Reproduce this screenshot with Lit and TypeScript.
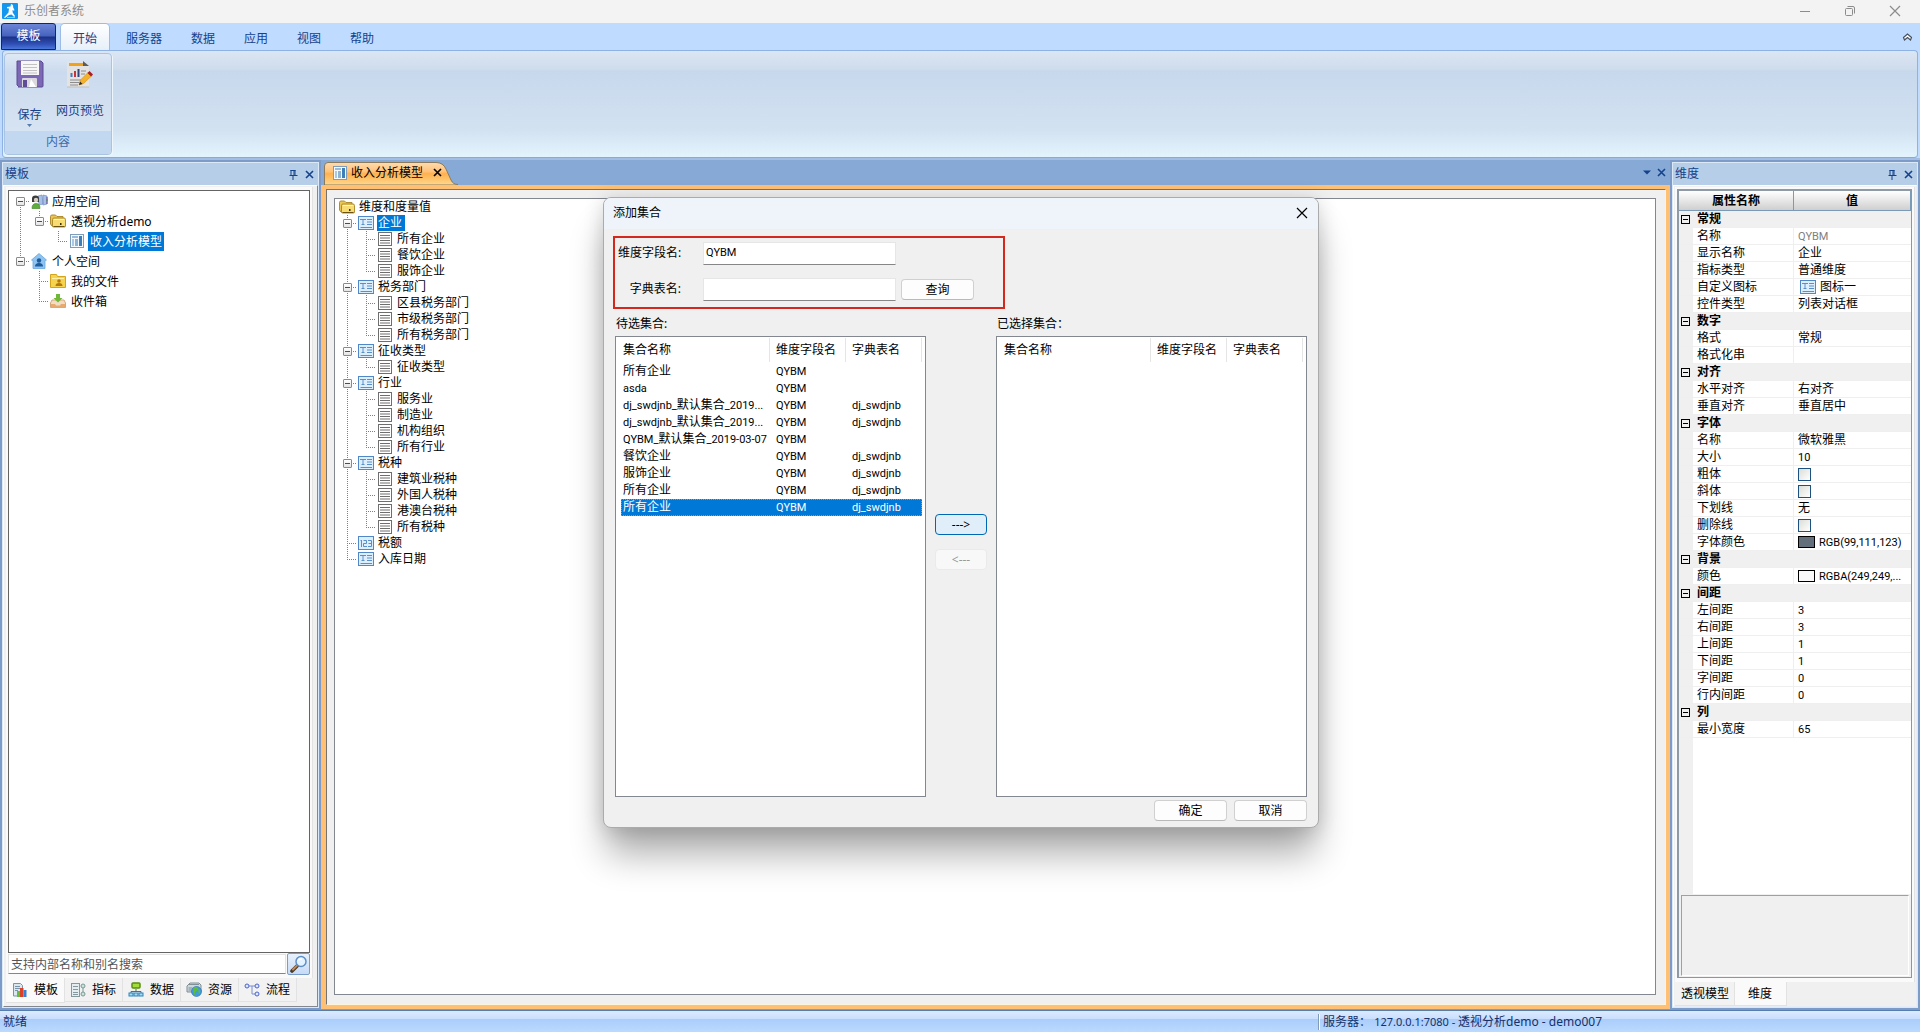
import { LitElement, html, svg, css, nothing } from "lit";
import { customElement, property, state } from "lit/decorators.js";
import { classMap } from "lit/directives/class-map.js";

/* ---------- icons ---------- */

const draw = (w: number, h: number, body: unknown, box = `0 0 ${w} ${h}`) =>
  html`<svg width=${w} height=${h} viewBox=${box} aria-hidden="true">${body}</svg>`;

const icons: Record<string, () => unknown> = {
  logo: () => draw(16, 16, svg`
    <rect width="16" height="16" rx="1" fill="#1296ee"/>
    <path d="M9 1l2 1 .2 2.500 1.300 2.500-.5.800-1.500-.8.200 2.500 2.300 3.500-.8 1-2.700-2.500-2.500.500L3 15l-1-.5 4.500-5L7 5.500 5 5.200V4l3.500-.5z" fill="#fff"/>
    <path d="M5 14.500h8" stroke="#bfe3ff" stroke-width=".7"/>`),
  save: () => draw(28, 28, svg`
    <path d="M1 1h24l2 2v23q0 1-1 1H3l-2-2z" fill="#7c68b4" stroke="#5d4a94"/>
    <rect x="5" y="1" width="18" height="14" fill="#f7f7f7"/>
    <path d="M7 4.500h14M7 7.500h14M7 10.500h14M7 13h14" stroke="#c2c2c2"/>
    <path d="M6 27v-8q0-1 1-1h13q1 0 1 1v8z" fill="#d9d9de"/>
    <path d="M7 27v-7h4v7z" fill="#5f4c96"/><path d="M15 19l5 8h-7z" fill="#fff"/>
    <path d="M2 27.500h24" stroke="#9a92b4"/>`),
  preview: () => draw(28, 28, svg`
    <path d="M1 1h17l5 5v21H1z" fill="#e3e3e3"/>
    <path d="M1 27h22" stroke="#bfbfbf"/>
    <path d="M3 3h14l3 3H3z" fill="#f0a21c"/><path d="M17 1l6 5h-6z" fill="#5c5c5c"/>
    <path d="M5.500 17v-4" stroke="#3f7fc0" stroke-width="2"/><path d="M9 17v-6" stroke="#c8323a" stroke-width="2"/>
    <path d="M12.500 17V9" stroke="#33447c" stroke-width="2"/>
    <path d="M15 11h5M15 14h4M4 20h11M4 22.500h9M4 25h8" stroke="#8c8c8c"/>
    <path d="M13 25l1.500-5 8-8 3.500 3.500-8.500 8z" fill="#f3b229" stroke="#d98d12" stroke-width=".6"/>
    <path d="M13 25l1-3.500 2.500 2.500z" fill="#2b2b2b"/>
    <path d="M21.500 13l2-2 3.500 3.500-2 2z" fill="#a81f2c"/>`),
  pin: () => draw(9, 11, svg`<path d="M2.500 1v5M6.500 1v5M2 1.500h5M1 6.500h8M4.500 7v4M5.500 1v5" transform="translate(-.5)" stroke="#15428b" fill="none"/>`),
  close: () => draw(9, 9, svg`<path d="M1 1l7 7M8 1l-7 7" stroke="currentColor" stroke-width="1.600"/>`),
  xthin: () => draw(12, 12, svg`<path d="M1 1l10 10M11 1L1 11" stroke="currentColor" stroke-width="1.200"/>`),
  min: () => draw(12, 12, svg`<path d="M1 6.500h10" stroke="currentColor"/>`),
  restore: () => draw(12, 12, svg`<path d="M3.500 1.500H9q1.500 0 1.500 1.500v5.500" stroke="currentColor" fill="none"/><rect x="1.500" y="3.500" width="7" height="7" rx="1" stroke="currentColor" fill="none"/>`),
  collapse: () => draw(11, 8, svg`<path d="M1.500 4.500l4-3.500 4 3.500-1 2.500-3-2.500L2.500 7z" fill="#fff" stroke="#44505f" stroke-width="1.200"/>`),
  down: () => draw(8, 5, svg`<path d="M0 .5h8l-4 4z" fill="currentColor"/>`),
  more: () => draw(5, 3, svg`<path d="M0 0h5L2.500 3z" fill="currentColor"/>`),
  folder: () => draw(16, 14, svg`
    <path d="M.5 2.500q0-1.500 1.500-1.500h3.500l1.500 1.500H13v9.500H2L.5 10z" fill="#e9c655" stroke="#a88524" stroke-width=".9"/>
    <path d="M2.500 5.500q0-1.500 1.500-1.500h10q1.500 0 1.500 1.500V12q0 1-1 1H3.500q-1 0-1-1z" fill="#f7dc74" stroke="#a88524" stroke-width=".9"/>
    <path d="M4 5.500h10" stroke="#fff6c2"/><path d="M3.500 12.500h11" stroke="#6b5210"/><rect x="10" y="9" width="1.500" height="2" fill="#3a2c08"/>`),
  users: () => draw(17, 15, svg`
    <path d="M7 2l4-1 1 9-4 1zM12 1l4 1v8l-4 1z" fill="#a9c0e6" stroke="#6f8fc4" stroke-width=".7"/>
    <path d="M16 3v7" stroke="#7a3fa0"/><path d="M16 5v2" stroke="#3f9c3a"/>
    <path d="M1 8V4.500Q1 1.500 4.500 1.500T8 4.500V8z" fill="#3b3b3b"/><circle cx="5" cy="6" r="2.200" fill="#d9d0c4"/>
    <path d="M1 14.500q0-5 4-5t4 5z" fill="#5fae3c" stroke="#3c7d22" stroke-width=".6"/>`),
  report: () => draw(14, 14, svg`
    <rect x=".5" y=".5" width="13" height="13" fill="#f4f9fd" stroke="#7f9dbb"/>
    <rect x="2" y="2" width="6" height="2" fill="#9bbbd8"/><rect x="2" y="5" width="2" height="7" fill="#a9c8e2"/>
    <rect x="5" y="5" width="3" height="7" fill="#8fb3d2"/><rect x="9" y="2" width="3" height="10" fill="#3f7fb8"/>`),
  home: () => draw(16, 16, svg`
    <path d="M8 .500l7.500 6.500-1.500.500V15.500H2V7.500L.5 7z" fill="#8fc3f2" stroke="#6aa6dd" stroke-width=".8"/>
    <circle cx="8" cy="7.500" r="2.200" fill="#1f5c9c"/><path d="M4 13.500q0-3.500 4-3.500t4 3.500z" fill="#1f5c9c"/>`),
  myfile: () => draw(16, 14, svg`
    <path d="M.5.500h6l1 2h8v11H.5z" fill="#f6d34e" stroke="#d3a51f"/><path d="M2 4.500h12" stroke="#fff0a8"/>
    <circle cx="9" cy="7" r="1.800" fill="#b3780b"/><path d="M5.500 12q0-3 3.500-3t3.500 3z" fill="#b3780b"/>`),
  inbox: () => draw(16, 14, svg`
    <path d="M2 6h12l1.500 3v4.500H.5V9z" fill="#f2dcc4" stroke="#d5a67a"/><path d="M1 10h4l1 1.500h4L11 10h4v3.500H1z" fill="#e8a96c"/>
    <path d="M6 0h4v4h2.500L8 8.500 3.500 4H6z" fill="#6fb83a"/>`),
  dim: () => draw(16, 14, svg`
    <rect x=".5" y=".5" width="15" height="13" fill="#ddeffc" stroke="#4f87c7"/>
    <path d="M2 3.500h6M5 3.500v5M3.500 8.500h3M9 3.500h5M9 6h5M9 8.500h5M2.500 11.500h11.500" stroke="#5a8fcb" fill="none"/>`),
  num: () => draw(16, 14, svg`
    <rect x=".5" y=".5" width="15" height="13" fill="#ddeffc" stroke="#4f87c7"/>
    <path d="M3.500 4v7M2.500 4.500h1M5.500 4.500h3v3h-3v3h3.500M10 4.500h3.500v6H10M10.500 7.500h3" stroke="#5a8fcb" fill="none"/>`),
  member: () => draw(14, 14, svg`
    <rect x=".5" y=".5" width="13" height="13" fill="#fff" stroke="#6e6e6e"/>
    <path d="M2 3.500h10M2 6h10M2 8.500h10M2 11h10" stroke="#6e6e6e"/>`),
  search: () => draw(18, 18, svg`
    <path d="M7.500 10.500L2 16" stroke="#4a3a2c" stroke-width="3.600" stroke-linecap="round"/>
    <path d="M7.500 10L3 14.500" stroke="#c08a55" stroke-width="2" stroke-linecap="round"/>
    <circle cx="11" cy="6.500" r="5" fill="#e3f3ff" stroke="#5d8fc7" stroke-width="1.500"/>
    <path d="M8.500 5.500q1-2 3.500-1.500" stroke="#fff" stroke-width="1.500" fill="none"/>`),
  tabTemplate: () => draw(16, 16, svg`
    <path d="M1.500 1.500h7l2 2V14h-9z" fill="#dbe7ef" stroke="#7894a8"/><path d="M3 4.500h5M3 6.500h5M3 8.500h3" stroke="#7894a8"/>
    <rect x="5" y="9" width="3" height="6" fill="#5fbf3f"/><rect x="8" y="6" width="3.500" height="9" fill="#d9412b"/><rect x="11.500" y="8" width="3" height="7" fill="#3b7fd0"/>`),
  tabIndex: () => draw(16, 16, svg`
    <rect x="1.500" y="1.500" width="8" height="13" fill="#e4eef0" stroke="#84989e"/><path d="M3 4.500h5M3 7.500h5M3 10.500h5M3 12.500h5" stroke="#84989e"/>
    <circle cx="13" cy="4" r="2" fill="#c9e2dc" stroke="#7b9a94"/><circle cx="13" cy="12" r="2" fill="#c9e2dc" stroke="#7b9a94"/><path d="M13 6v4" stroke="#7b9a94"/>`),
  tabData: () => draw(16, 16, svg`
    <rect x="4" y="1" width="8" height="5" rx="1" fill="#a6dc3a" stroke="#5a8f12" stroke-width="1.500"/><path d="M8 7v3M3 11V9.500h10V11" stroke="#5a6a7a" fill="none"/>
    <rect x="1" y="11" width="4" height="3" fill="#9fdcf5" stroke="#2c84ba"/><rect x="6" y="11" width="4" height="3" fill="#9fdcf5" stroke="#2c84ba"/><rect x="11" y="11" width="4" height="3" fill="#9fdcf5" stroke="#2c84ba"/>`),
  tabRes: () => draw(16, 16, svg`
    <path d="M1 4l3-3h9l2 2v7H1z" fill="#cdd8dc" stroke="#7e8f96"/><path d="M3 2.500h10M2.500 6h4M2.500 8h3" stroke="#7e8f96"/>
    <circle cx="10.500" cy="9.500" r="5" fill="#3f9be0" stroke="#2668a8" stroke-width=".6"/><path d="M7.500 6q2-2 4-.5t-1 3.500 0 5q-3.500-1-3-8zM13 7q2 2 1 5l-2-2z" fill="#5bbd3a"/>`),
  tabFlow: () => draw(16, 16, svg`
    <path d="M5 4h6M8 4v8h3" stroke="#7a8fd0" fill="none"/><circle cx="3" cy="4" r="2" fill="#dfe6ff" stroke="#4b63c8"/>
    <circle cx="13" cy="4" r="2" fill="#dfe6ff" stroke="#4b63c8"/><circle cx="13" cy="12" r="2" fill="#dfe6ff" stroke="#4b63c8"/>`),
};

/* Latin runs are set one pixel smaller than the Chinese text beside them. */
const mixed = (text: string) =>
  text.split(/([\x20-\x7e]+)/).filter(Boolean).map((part) =>
    /^[\x20-\x7e]+$/.test(part) ? html`<span class="latin">${part}</span>` : part);

const base = css`
  *, *::before, *::after { box-sizing: border-box; }
  svg { display: block; flex: none; }
  button, input { font: inherit; color: inherit; margin: 0; }
  button { padding: 0; border: 0; background: none; }
  button, a { cursor: default; }
  .latin { font-family: Roboto, "Noto Sans", sans-serif; font-size: 11px; line-height: 1; }
`;

/* ---------- tree ---------- */

interface Node { label: string; icon: string; selected?: boolean; children?: Node[] }

@customElement("tree-view")
class TreeView extends LitElement {
  @property({ attribute: false }) nodes: Node[] = [];
  @property({ type: Number }) row = 16;
  @property({ type: Boolean }) rooted = false;
  @state() private closed = new Set<Node>();

  static styles = [base, css`
    :host { display: block; color: #000; }
    .row { display: flex; align-items: center; white-space: nowrap; }
    .row.h20 { height: 20px; }
    .row.h16 { height: 16px; }
    .guide { display: grid; width: 19px; place-items: center; flex: none; }
    .guide > * { grid-area: 1 / 1; }
    .box { width: 9px; height: 9px; border: 1px solid #8a8a8a; border-radius: 1px; background: linear-gradient(#fff, #e4e4e4); display: grid; place-items: center; }
    .bar { width: 5px; height: 1px; background: #35507c; }
    .pic { width: 18px; display: grid; place-items: center; flex: none; }
    .label { margin-left: 2px; padding: 0 2px; }
    .h16 .label { padding: 0 3px 0 1px; line-height: 16px; }
    .h20 .label { line-height: 19px; }
    .label.selected { background: #0078d7; color: #fff; }
  `];

  private toggle(n: Node) {
    const next = new Set(this.closed);
    next.has(n) ? next.delete(n) : next.add(n);
    this.closed = next;
  }

  private line(up: boolean, down: boolean, across: boolean) {
    const h = this.row, mid = h / 2;
    return html`<svg width="19" height=${h} shape-rendering="crispEdges" aria-hidden="true">${svg`
      <g stroke="#808080" stroke-dasharray="1 1">
        ${up ? svg`<path d="M9.500 0V${mid}"/>` : nothing}
        ${down ? svg`<path d="M9.500 ${mid}V${h}"/>` : nothing}
        ${across ? svg`<path d="M9 ${mid + 0.5}H19"/>` : nothing}
      </g>`}</svg>`;
  }

  private branch(nodes: Node[], trail: boolean[], level: number): unknown {
    return nodes.map((n, i) => {
      const last = i === nodes.length - 1;
      const bare = this.rooted && level === 0;
      return html`
        <div class="row h${this.row}" role="treeitem" aria-selected=${n.selected ? "true" : "false"}>
          ${trail.map((on) => html`<span class="guide">${this.line(on, on, false)}</span>`)}
          ${bare ? nothing : html`<span class="guide">
            ${this.line(level > 0 || i > 0, !last, true)}
            ${n.children ? html`<button class="box" aria-label=${n.label} @click=${() => this.toggle(n)}><span class="bar"></span></button>` : nothing}
          </span>`}
          <span class="pic">${icons[n.icon]()}</span>
          <span class=${classMap({ label: true, selected: !!n.selected })}>${n.label}</span>
        </div>
        ${n.children && !this.closed.has(n) ? this.branch(n.children, bare ? [] : [...trail, !last], level + 1) : nothing}`;
    });
  }

  render() {
    return html`<div role="tree">${this.branch(this.nodes, [], 0)}</div>`;
  }
}

/* ---------- dialog ---------- */

const sets: string[][] = [
  ["所有企业", "QYBM", ""],
  ["asda", "QYBM", ""],
  ["dj_swdjnb_默认集合_2019...", "QYBM", "dj_swdjnb"],
  ["dj_swdjnb_默认集合_2019...", "QYBM", "dj_swdjnb"],
  ["QYBM_默认集合_2019-03-07", "QYBM", ""],
  ["餐饮企业", "QYBM", "dj_swdjnb"],
  ["服饰企业", "QYBM", "dj_swdjnb"],
  ["所有企业", "QYBM", "dj_swdjnb"],
  ["所有企业", "QYBM", "dj_swdjnb"],
];

@customElement("set-dialog")
class SetDialog extends LitElement {
  @state() private picked = 8;

  static styles = [base, css`
    :host { position: absolute; inset: 0; display: grid; place-items: center; padding: 0 0 8px 2px; color: #000; }
    dialog { position: static; margin: 0; padding: 0; border: 1px solid #a9abad; border-radius: 8px; background: #f0f0f0; color: inherit;
      width: 716px; overflow: hidden; box-shadow: 0 30px 36px -4px rgba(0,0,0,.32), 0 2px 20px rgba(0,0,0,.16); }
    header { display: flex; justify-content: space-between; align-items: center; height: 31px; padding: 0 10px 0 9px; background: #eef4f9; }
    h2 { margin: 0; font-size: 12px; font-weight: 400; }
    .body { padding: 7px 11px 6px; }
    form { width: 392px; margin-left: -2px; border: 2px solid #d4281e; padding: 4px 3px 6px; display: grid; grid-template-columns: 80px 193px 73px; grid-auto-rows: 23px; gap: 13px 5px; align-items: center; }
    label { padding-right: 17px; text-align: right; white-space: nowrap; line-height: 20px; }
    .text { width: 100%; height: 23px; border: 1px solid #e6e6e6; border-bottom-color: #868686; border-radius: 0; background: #fff; padding: 0 2px 2px; outline: none; font-family: Roboto, "Noto Sans CJK SC", sans-serif; font-size: 11px; }
    .btn { height: 21px; width: 73px; border: 1px solid #d0d0d0; border-bottom-color: #b9b9b9; border-radius: 4px; background: #fdfdfd; line-height: 19px; }
    .btn.move { width: 52px; }
    .btn.hot { background: #e0eef9; border-color: #0067b5; }
    .btn:disabled { background: #f8f8f8; border-color: #eaeaea; color: #9a9a9a; }
    .lists { display: grid; grid-template-columns: 1fr 70px 1fr; }
    .caption { margin: 4px 0 0; height: 23px; line-height: 22px; padding-left: 1px; }
    .moves { display: flex; flex-direction: column; align-items: center; gap: 14px; padding-top: 205px; }
    .list { height: 461px; border: 1px solid #828790; background: #fff; padding: 0 0 0 5px; }
    table { border-collapse: collapse; table-layout: fixed; width: 301px; }
    .c1 { width: 149px; }
    th, td { text-align: left; font-weight: 400; padding: 0 0 0 6px; white-space: nowrap; overflow: hidden; }
    th:first-child, td:first-child { padding-left: 2px; }
    th { height: 26px; padding-bottom: 0; background: linear-gradient(#e5e5e5, #e5e5e5) right 1px / 1px 24px no-repeat; }
    td { height: 17px; line-height: 16px; }
    .on td { background: #0078d7; color: #fff; }
    .on { outline: 1px dotted #d8863a; outline-offset: -1px; }
    footer { display: flex; justify-content: flex-end; gap: 7px; padding-top: 3px; }
  `];

  private list(rows: string[][]) {
    return html`<div class="list"><table>
      <colgroup><col class="c1" /><col /><col /></colgroup>
      <thead><tr><th>集合名称</th><th>维度字段名</th><th>字典表名</th></tr></thead>
      <tbody>${rows.map((r, i) => html`<tr class=${classMap({ on: i === this.picked })} @click=${() => (this.picked = i)}>
        ${r.map((c) => html`<td>${mixed(c)}</td>`)}</tr>`)}</tbody>
    </table></div>`;
  }

  render() {
    return html`<dialog open aria-labelledby="title">
      <header><h2 id="title">添加集合</h2><button aria-label="关闭">${icons.xthin()}</button></header>
      <div class="body">
        <form @submit=${(e: Event) => e.preventDefault()}>
          <label for="field">维度字段名:</label><input id="field" class="text" .value=${"QYBM"} /><span></span>
          <label for="dict">字典表名:</label><input id="dict" class="text" /><button class="btn">查询</button>
        </form>
        <div class="lists">
          <div><p class="caption">待选集合:</p>${this.list(sets)}</div>
          <div class="moves"><button class="btn move hot">---&gt;</button><button class="btn move" disabled>&lt;---</button></div>
          <div><p class="caption">已选择集合：</p>${this.list([])}</div>
        </div>
        <footer><button class="btn">确定</button><button class="btn">取消</button></footer>
      </div>
    </dialog>`;
  }
}

/* ---------- property grid ---------- */

interface Prop { name: string; value?: string; muted?: boolean; icon?: string; check?: boolean; swatch?: string }

const groups: { title: string; items: Prop[] }[] = [
  { title: "常规", items: [{ name: "名称", value: "QYBM", muted: true }, { name: "显示名称", value: "企业" }, { name: "指标类型", value: "普通维度" }, { name: "自定义图标", value: "图标一", icon: "dim" }, { name: "控件类型", value: "列表对话框" }] },
  { title: "数字", items: [{ name: "格式", value: "常规" }, { name: "格式化串" }] },
  { title: "对齐", items: [{ name: "水平对齐", value: "右对齐" }, { name: "垂直对齐", value: "垂直居中" }] },
  { title: "字体", items: [{ name: "名称", value: "微软雅黑" }, { name: "大小", value: "10" }, { name: "粗体", check: true }, { name: "斜体", check: true }, { name: "下划线", value: "无" }, { name: "删除线", check: true }, { name: "字体颜色", value: "RGB(99,111,123)", swatch: "rgb(99,111,123)" }] },
  { title: "背景", items: [{ name: "颜色", value: "RGBA(249,249,...", swatch: "rgb(249,249,249)" }] },
  { title: "间距", items: [{ name: "左间距", value: "3" }, { name: "右间距", value: "3" }, { name: "上间距", value: "1" }, { name: "下间距", value: "1" }, { name: "字间距", value: "0" }, { name: "行内间距", value: "0" }] },
  { title: "列", items: [{ name: "最小宽度", value: "65" }] },
];

@customElement("property-grid")
class PropertyGrid extends LitElement {
  static styles = [base, css`
    :host { display: flex; flex-direction: column; border: 2px solid #8f9aa8; border-right: 1px solid #7b99bd; border-bottom: 1px solid #7b99bd; color: #000; background: #f0f0f0; }
    .sheet { flex: 1; background: linear-gradient(90deg, #f0f0f0 14px, #fff 14px); }
    table { border-collapse: separate; border-spacing: 0; table-layout: fixed; width: 100%; }
    .g { width: 14px; } .n { width: 101px; }
    th { height: 20px; padding: 0; font-weight: 700; line-height: 19px; background: linear-gradient(#fff, #cfcfcf); border-right: 1px solid #7b9ab8; border-bottom: 1px solid #7b9ab8; }
    td { height: 17px; padding: 0 0 0 4px; line-height: 16px; border-bottom: 1px solid #efefef; white-space: nowrap; overflow: hidden; }
    td:first-child { padding: 0 0 0 2px; background: #f0f0f0; }
    .item td:nth-child(2) { border-right: 1px solid #efefef; }
    .cat td { background: #f0f0f0; font-weight: 700; }
    .fold { display: grid; place-items: center; width: 9px; height: 9px; border: 1px solid #000; }
    .fold span { width: 5px; height: 1px; background: #000; }
    .val { display: flex; align-items: center; gap: 4px; height: 16px; }
    .val svg { margin-left: 2px; }
    .muted { color: #808080; }
    .swatch { width: 17px; height: 12px; border: 1px solid #000; }
    input { appearance: none; width: 13px; height: 13px; border: 1px solid #1c5180; background: linear-gradient(135deg, #dcdcd7, #fff); }
    .note { height: 81px; margin: 1px 2px 1px; border: 1px solid #a0a0a0; border-right-color: #fff; border-bottom-color: #fff; }
  `];

  render() {
    return html`<div class="sheet"><table>
      <colgroup><col class="g" /><col class="n" /><col /></colgroup>
      <thead><tr><th colspan="2">属性名称</th><th>值</th></tr></thead>
      <tbody>${groups.map((g, gi) => html`
        <tr class="cat"><td><button class="fold" aria-label=${g.title}><span></span></button></td><td colspan="2">${g.title}</td></tr>
        ${g.items.map((p, i) => {
          const id = `p${gi}-${i}`;
          return html`<tr class="item"><td></td>
            <td>${p.check ? html`<label for=${id}>${p.name}</label>` : p.name}</td>
            <td><span class=${classMap({ val: true, muted: !!p.muted })}>
              ${p.icon ? icons[p.icon]() : nothing}
              ${p.swatch ? html`<span class="swatch" style="background:${p.swatch}"></span>` : nothing}
              ${p.check ? html`<input id=${id} type="checkbox" />` : html`<span>${mixed(p.value ?? "")}</span>`}
            </span></td></tr>`;
        })}`)}
      </tbody></table></div><div class="note"></div>`;
  }
}

/* ---------- page ---------- */

const spaces: Node[] = [
  { label: "应用空间", icon: "users", children: [
    { label: "透视分析demo", icon: "folder", children: [{ label: "收入分析模型", icon: "report", selected: true }] }] },
  { label: "个人空间", icon: "home", children: [{ label: "我的文件", icon: "myfile" }, { label: "收件箱", icon: "inbox" }] },
];

const dim = (label: string, members: string[], selected = false): Node =>
  ({ label, icon: "dim", selected, children: members.map((m) => ({ label: m, icon: "member" })) });

const model: Node[] = [{ label: "维度和度量值", icon: "folder", children: [
  dim("企业", ["所有企业", "餐饮企业", "服饰企业"], true),
  dim("税务部门", ["区县税务部门", "市级税务部门", "所有税务部门"]),
  dim("征收类型", ["征收类型"]),
  dim("行业", ["服务业", "制造业", "机构组织", "所有行业"]),
  dim("税种", ["建筑业税种", "外国人税种", "港澳台税种", "所有税种"]),
  { label: "税额", icon: "num" },
  { label: "入库日期", icon: "dim" },
] }];

const sideTabs = [["模板", "tabTemplate"], ["指标", "tabIndex"], ["数据", "tabData"], ["资源", "tabRes"], ["流程", "tabFlow"]];

@customElement("app-root")
class AppRoot extends LitElement {
  static styles = [base, css`
    :host { display: flex; flex-direction: column; position: relative; height: 100vh; overflow: hidden; background: #7c9bc9;
      font: 12px/16px "Noto Sans", "Noto Sans CJK SC", sans-serif; color: #15428b; }
    .title { display: flex; align-items: center; height: 23px; padding: 0 19px 2px 2px; background: #f3f3f3; color: #8c8c8c; gap: 6px; }
    .title span { flex: 1; }
    .wins { display: flex; gap: 33px; }
    nav { display: flex; align-items: stretch; height: 27px; background: #bfdbff; padding: 0 7px 0 1px; gap: 5px; }
    nav button { padding: 5px 12px 0; }
    nav .app { width: 55px; padding: 0 0 2px; border: 1px solid #15246b; border-radius: 3px 3px 0 0; color: #fff; background: linear-gradient(#6c86d6, #4562bd 48%, #1c3185 52%, #2f4fb4 80%, #4a76dc); }
    nav .open { margin-top: 1px; border-radius: 4px 4px 0 0; background: linear-gradient(#fff, #e6eff9); box-shadow: 0 0 0 1px #9dbbe4; padding-top: 4px; }
    nav a { display: grid; place-items: center; color: inherit; }
    .fill { flex: 1; }
    .ribbon-wrap { background: #bfdbff; padding: 0 2px; }
    .ribbon { height: 108px; padding: 2px 1px; border: 1px solid #8db2e3; border-bottom-color: #7fb0d4; border-radius: 4px;
      background: linear-gradient(#dbe6f4, #cfdcec 17%, #c7d8ed 19%, #d3e2f1 75%, #e3f4fe); }
    .group { display: flex; flex-direction: column; width: 108px; height: 102px; border: 1px solid #a9c4e2; border-radius: 4px; box-shadow: 1px 1px 0 #eef6fd; overflow: hidden; background: linear-gradient(#dfe9f5, #cbdaee 18%, #dbe7f4); }
    .tools { flex: 1; display: flex; gap: 2px; padding: 6px 0 0 2px; }
    .tool { display: flex; flex-direction: column; align-items: center; width: 45px; line-height: 16px; }
    .tool.wide { width: 52px; white-space: nowrap; }
    .tool .cap { padding-top: 19px; }
    .tool.wide .cap { padding-top: 15px; }
    .tool .arrow { color: #567db1; padding-top: 1px; }
    .group p { margin: 0; height: 23px; line-height: 22px; text-align: center; background: #c1d8f0; color: #3e6aaa; }
    main { flex: 1; min-height: 0; display: flex; gap: 2px; padding: 0 2px; border-top: 2px solid #a3bee2; }
    .side { display: flex; flex-direction: column; margin: 2px 0; border: 1px solid #dbe8f6; background: #f0f0f0; }
    .left { width: 317px; } .right { width: 246px; }
    .head { display: flex; align-items: center; gap: 7px; height: 22px; padding: 0 4px 0 2px; background: #b7cee8; }
    .head h2 { flex: 1; margin: 0; font-size: 12px; font-weight: 400; }
    .pane { flex: 1; min-height: 0; display: flex; flex-direction: column; padding: 1px 4px 3px 2px; border: 1px solid #fcfcfc; border-right: 1px solid #83888f; border-bottom: 1px solid #83888f; }
    .sheet { flex: 1; min-height: 0; display: flex; flex-direction: column; background: #fafafa; padding: 3px 2px 3px; border-right: 1px solid #e2e2e2; }
    .tree { flex: 1; border: 1px solid #646464; background: #fff; padding-left: 2px; }
    .find { display: flex; gap: 1px; }
    .find input { flex: 1; min-width: 0; height: 20px; margin-top: 1px; border: 1px solid #e4e4e4; border-bottom-color: #868686; background: #fff; padding: 0 2px; color: #555; }
    .find input::placeholder { color: #555; opacity: 1; }
    .find button { display: grid; place-items: center; width: 23px; height: 22px; border: 1px solid #7a9cc8; border-radius: 2px; background: linear-gradient(#e8f1fb, #c6dcf5); }
    .tabs { display: flex; align-items: flex-start; height: 25px; }
    .tabs button { display: flex; align-items: center; gap: 6px; height: 24px; padding: 0 6px 0 5px; border: 1px solid #e2e2e2; border-top: 0; border-left: 0; background: #f2f2f2; color: #000; white-space: nowrap; }
    .tabs .open { height: 25px; background: #fafafa; }
    .left .tabs .open { padding-left: 6px; }
    .right .tabs { height: 24px; }
    .right .tabs button { padding: 0 5px 0 6px; }
    .right .tabs .open { height: 24px; padding: 0 14px 0 13px; }
    .right .pane { padding: 1px 1px 0 1px; border-right-color: #e6edf6; border-bottom-color: #e6edf6; }
    .right .sheet { padding: 2px 2px 4px; }
    property-grid { flex: 1; }
    .doc { flex: 1; min-width: 0; display: flex; flex-direction: column; margin-bottom: 1px; }
    .strip { display: flex; align-items: center; height: 25px; padding: 0 4px 0 3px; background: #87a9d6; gap: 6px; }
    .doctab { display: grid; align-self: flex-end; }
    .doctab > * { grid-area: 1 / 1; }
    .doctab .in { display: flex; align-items: center; padding: 0 0 1px 9px; gap: 4px; color: #000; z-index: 1; }
    .doctab button { margin-left: 6px; display: block; }
    .frame { flex: 1; display: flex; border: 4px solid #ffc073; border-left-width: 5px; }
    .work { flex: 1; display: flex; background: #f0f0f0; border: 1px solid #77736c; border-right-color: #fbf3dc; border-bottom-color: #fbf3dc; padding: 8px 9px 9px 7px; }
    .canvas { flex: 1; border: 1px solid #828790; background: #fff; padding: 0 0 0 3px; }
    .status { display: flex; align-items: center; height: 22px; border-top: 1px solid #567db0; color: #15316b; background: linear-gradient(#dcebff, #c9dffd 36%, #aacdfa 40%, #bcdaff); }
    .state { flex: 1; padding-left: 3px; }
    .host { flex: 0 0 602px; border-left: 1px solid #7f9db9; box-shadow: inset 1px 0 0 #fff; padding-left: 4px; }
    .status .latin { font-family: "Noto Sans", sans-serif; }
  `];

  private head(title: string) {
    return html`<div class="head"><h2>${title}</h2><button aria-label="固定">${icons.pin()}</button><button aria-label="关闭">${icons.close()}</button></div>`;
  }

  render() {
    return html`
      <header class="title">${icons.logo()}<span>乐创者系统</span>
        <div class="wins"><button aria-label="最小化">${icons.min()}</button><button aria-label="还原">${icons.restore()}</button><button aria-label="关闭">${icons.xthin()}</button></div>
      </header>
      <nav><button class="app">模板</button><button class="open">开始</button>
        ${["服务器", "数据", "应用", "视图", "帮助"].map((t) => html`<button>${t}</button>`)}
        <span class="fill"></span><a href="#" aria-label="折叠">${icons.collapse()}</a></nav>
      <div class="ribbon-wrap"><div class="ribbon"><div class="group">
        <div class="tools">
          <button class="tool">${icons.save()}<span class="cap">保存</span><span class="arrow">${icons.more()}</span></button>
          <button class="tool wide">${icons.preview()}<span class="cap">网页预览</span></button>
        </div><p>内容</p></div></div></div>
      <main>
        <section class="side left">${this.head("模板")}
          <div class="pane"><div class="sheet">
            <div class="tree"><tree-view .nodes=${spaces} .row=${20}></tree-view></div>
            <div class="find"><input aria-label="搜索" placeholder="支持内部名称和别名搜索" /><button aria-label="搜索">${icons.search()}</button></div>
          </div>
          <div class="tabs">${sideTabs.map(([t, i], n) => html`<button class=${n ? "" : "open"}>${icons[i]()}${t}</button>`)}</div></div>
        </section>
        <section class="doc">
          <div class="strip">
            <div class="doctab">
              <svg width="134" height="24" viewBox="0 0 134 24"><defs><linearGradient id="o" x2="0" y2="1"><stop offset="0" stop-color="#ffdcae"/><stop offset=".4" stop-color="#ffc27a"/><stop offset=".5" stop-color="#ffb04d"/><stop offset="1" stop-color="#ffd98e"/></linearGradient></defs>
                <path d="M.5 24V5Q.5 1.500 4 1.500H112Q119 1.500 122 8L127 19Q129 23.500 134 23.500V24Z" fill="url(#o)" stroke="#8b7a5c"/></svg>
              <div class="in">${icons.report()}收入分析模型<button aria-label="关闭">${icons.close()}</button></div>
            </div>
            <span class="fill"></span><button aria-label="窗口列表">${icons.down()}</button><button aria-label="关闭">${icons.close()}</button>
          </div>
          <div class="frame"><div class="work"><div class="canvas"><tree-view .nodes=${model} .row=${16} rooted></tree-view></div></div></div>
        </section>
        <section class="side right">${this.head("维度")}
          <div class="pane"><div class="sheet"><property-grid></property-grid></div>
          <div class="tabs"><button>透视模型</button><button class="open">维度</button></div></div>
        </section>
      </main>
      <footer class="status"><span class="state">就绪</span><span class="host">服务器： <span class="latin">127.0.0.1:7080 - </span>透视分析demo - demo007</span></footer>
      <set-dialog></set-dialog>`;
  }
}
